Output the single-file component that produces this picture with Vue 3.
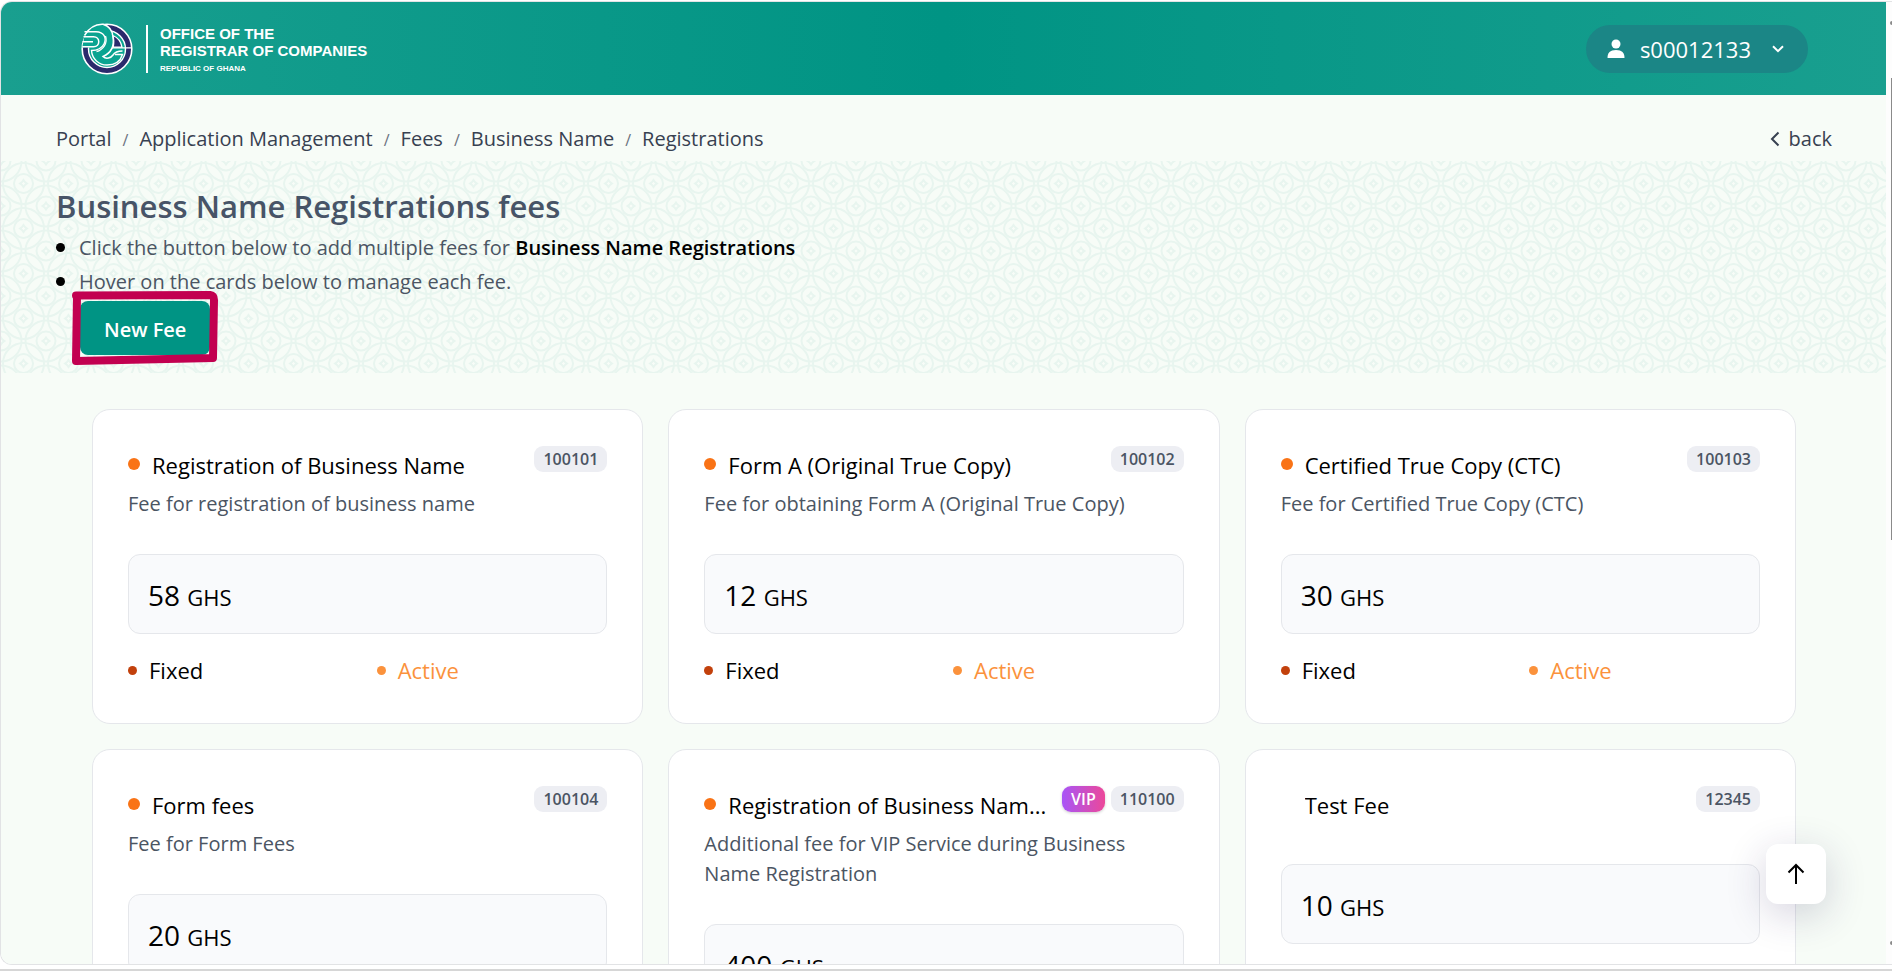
<script setup>
const crumbs = ['Portal', 'Application Management', 'Fees', 'Business Name', 'Registrations']

const fees = [
  { code: '100101', title: 'Registration of Business Name', desc: 'Fee for registration of business name', amount: 58, dot: true },
  { code: '100102', title: 'Form A (Original True Copy)', desc: 'Fee for obtaining Form A (Original True Copy)', amount: 12, dot: true },
  { code: '100103', title: 'Certified True Copy (CTC)', desc: 'Fee for Certified True Copy (CTC)', amount: 30, dot: true },
  { code: '100104', title: 'Form fees', desc: 'Fee for Form Fees', amount: 20, dot: true },
  { code: '110100', title: 'Registration of Business Nam...', desc: 'Additional fee for VIP Service during Business Name Registration', amount: 400, dot: true, vip: true },
  { code: '12345', title: 'Test Fee', desc: '', amount: 10, dot: false },
]
</script>

<template>
  <div class="frame">
    <div class="window">
      <div class="page">
        <header class="topbar">
          <a href="#" class="brand">
            <svg class="logo" viewBox="0 0 52 52" aria-hidden="true">
              <circle cx="26" cy="26" r="24.800" fill="#2b2a6c" stroke="#fff" stroke-width="1.600" />
              <circle cx="26" cy="26" r="18.500" fill="#0aa491" stroke="#fff" stroke-width="1.400" />
              <path d="M1.200 24.500L4 10.500C9 4 15 1.300 22 1.300C29 3 32 8 32.500 14C35 24 31 31 23 35L12 31L9 24.500Z" fill="#0aa491" />
              <path d="M3.500 12.500C8 5 15 1 22 1.300C28 3 31.500 8 32 14C33.500 23 30 30 22 33.500C25 36.500 30 35 32 32C33.500 29.500 36 28 41.500 28" fill="none" stroke="#fff" stroke-width="1.500" />
              <path d="M3.500 8.800H15C23 9 26 15 23 21C20.500 26 15 27.500 10.500 27.500C11 36 18 42 26 42C34 42 39.500 38 41.500 31.500H34" fill="none" stroke="#fff" stroke-width="1.400" />
              <path d="M2.500 13.800H12.500C19.500 13.800 19.500 23.800 12.500 23.800H1.200" fill="none" stroke="#fff" stroke-width="1.500" />
              <path d="M1.500 18.800H12" stroke="#fff" stroke-width="1.400" />
              <path d="M24.500 13C27 20 22 27 15.500 28.500" fill="none" stroke="#fff" stroke-width="1.300" />
              <path d="M31.800 12.500C37 14.500 40 18.500 41 24.200H32.200C33 20 33 16 31.800 12.500Z" fill="#2b2a6c" stroke="#fff" stroke-width="1.300" />
              <path d="M31 24.800H50.500" stroke="#fff" stroke-width="1.200" />
            </svg>
            <span class="rule"></span>
            <span class="brand-text">
              <span>OFFICE OF THE</span>
              <span>REGISTRAR OF COMPANIES</span>
              <small>REPUBLIC OF GHANA</small>
            </span>
          </a>
          <button type="button" class="user">
            <svg class="user-icon" viewBox="0 0 18 20" aria-hidden="true">
              <circle cx="9" cy="5" r="4.500" fill="#fff" />
              <path d="M0.500 18.500C0.500 14 3 11 9 11S17.500 14 17.500 18.500Q17.500 19 17 19H1Q0.500 19 0.500 18.500Z" fill="#fff" />
            </svg>
            <span>s00012133</span>
            <svg class="chev" viewBox="0 0 12 8" aria-hidden="true">
              <path d="M1 1.200L6 6.200L11 1.200" fill="none" stroke="#fff" stroke-width="2" />
            </svg>
          </button>
        </header>

        <div class="trail">
          <nav aria-label="Breadcrumb">
            <ol class="crumbs">
              <li v-for="c in crumbs" :key="c"><a href="#">{{ c }}</a></li>
            </ol>
          </nav>
          <a href="#" class="back">
            <svg viewBox="0 0 10 16" aria-hidden="true">
              <path d="M8.500 1.500L2 8L8.500 14.500" fill="none" stroke="#374151" stroke-width="2" />
            </svg>
            back
          </a>
        </div>

        <section class="hero">
          <svg class="pattern" aria-hidden="true">
            <defs>
              <pattern id="rings" width="45" height="45" patternUnits="userSpaceOnUse">
                <g fill="none" stroke="#e8f5ef" stroke-width="2">
                  <g v-for="p in [[22.5, 22.5], [0, 0], [45, 0], [0, 45], [45, 45]]" :key="p.join()" :transform="`translate(${p[0]} ${p[1]})`">
                    <circle r="20.500" />
                    <circle r="9.500" />
                    <path d="M0 -3.500L1.500 -1.500L3.500 0L1.500 1.500L0 3.500L-1.500 1.500L-3.500 0L-1.500 -1.500Z" />
                  </g>
                </g>
              </pattern>
            </defs>
            <rect width="100%" height="100%" fill="url(#rings)" />
          </svg>
          <div class="hero-body">
            <h1>Business Name Registrations fees</h1>
            <ul>
              <li>Click the button below to add multiple fees for <strong>Business Name Registrations</strong></li>
              <li>Hover on the cards below to manage each fee.</li>
            </ul>
            <div class="cta">
              <button type="button" class="new-fee">New Fee</button>
              <svg class="marker" viewBox="0 0 146 74" aria-hidden="true">
                <path d="M4 4.500L138 4C141 4.500 142 6 142 9L141 67L4 70L5 5" fill="none" stroke="#c20050" stroke-width="8" stroke-linecap="round" stroke-linejoin="round" />
              </svg>
            </div>
          </div>
        </section>

        <main class="grid">
          <article v-for="f in fees" :key="f.code" class="card">
            <div class="card-head">
              <span class="dot" :class="{ off: !f.dot }"></span>
              <h2>{{ f.title }}</h2>
              <div class="tags">
                <span v-if="f.vip" class="tag vip">VIP</span>
                <span class="tag">{{ f.code }}</span>
              </div>
            </div>
            <p class="desc">{{ f.desc }}</p>
            <div class="amount"><span>{{ f.amount }}</span> <small>GHS</small></div>
            <div class="meta">
              <span class="kind">Fixed</span>
              <span class="kind active">Active</span>
            </div>
          </article>
        </main>
      </div>
      <div class="scroll">
        <span class="tip"></span>
        <span class="thumb"></span>
        <span class="tip"></span>
      </div>
    </div>
    <button type="button" class="to-top" aria-label="Back to top">
      <svg viewBox="0 0 18 22" aria-hidden="true">
        <path d="M9 21V2M1.500 9.500L9 2L16.500 9.500" fill="none" stroke="#000" stroke-width="2" />
      </svg>
    </button>
  </div>
</template>

<style>
body {
  margin: 0;
  background: #fff;
}
</style>

<style scoped>
* {
  box-sizing: border-box;
}
.frame {
  position: relative;
  height: 100vh;
  padding: 1px 0 4px;
  overflow: hidden;
  background: #fff;
  border-bottom: 2px solid #d6d6d6;
  font-family: "Segoe UI", "Open Sans", "Noto Sans", sans-serif;
  font-size: 20px;
  color: #000;
}
.window {
  display: flex;
  height: 100%;
  overflow: hidden;
  border: 1px solid #e2e3e5;
  border-right: 0;
  border-radius: 12px 0 0 12px;
}
.page {
  flex: 1;
  min-width: 0;
  background: #f7fcf7;
}
.scroll {
  display: flex;
  flex-direction: column;
  align-items: flex-end;
  width: 6px;
  padding: 19px 0;
  background: #fdfdfd;
}
.thumb {
  width: 1px;
  height: 50%;
  margin: 53px 0 auto;
  background: #8a8a8a;
}
.tip {
  width: 2px;
  height: 4px;
  border-radius: 2px 0 0 2px;
  background: #8a8a8a;
}
a {
  color: inherit;
  text-decoration: none;
}
button {
  border: 0;
  font: inherit;
}
.topbar {
  display: flex;
  align-items: center;
  justify-content: space-between;
  height: 93px;
  padding: 0 78px 0 80px;
  background: linear-gradient(90deg, #199f8f, #009484 50%, #199f8f);
  color: #fff;
}
.brand {
  display: flex;
  align-items: center;
}
.logo {
  width: 52px;
  height: 52px;
}
.rule {
  width: 2px;
  height: 48px;
  margin: 0 12px 0 13px;
  background: #fff;
}
.brand-text {
  display: flex;
  flex-direction: column;
  padding-top: 2px;
  font: bold 15px/17px "Liberation Sans", Arial, sans-serif;
}
.brand-text small {
  margin-top: 4px;
  font-size: 8px;
  line-height: 12px;
}
.user {
  display: flex;
  align-items: center;
  height: 48px;
  padding: 0 24px 0 21px;
  border-radius: 24px;
  background: #1b8686;
  color: #fff;
  font-size: 22px;
}
.user-icon {
  width: 18px;
  height: 20px;
  margin-right: 15px;
}
.chev {
  width: 12px;
  height: 8px;
  margin-left: 21px;
}
.trail {
  display: flex;
  align-items: center;
  justify-content: space-between;
  height: 66px;
  padding: 21px 54px 0 55px;
  color: #374151;
}
.crumbs {
  display: flex;
  margin: 0;
  padding: 0;
  list-style: none;
}
.crumbs li + li::before {
  content: "/";
  margin: 0 11px;
  color: #6b7280;
  font-size: 16px;
}
.back {
  display: flex;
  align-items: center;
  gap: 9px;
}
.back svg {
  width: 10px;
  height: 16px;
}
.hero {
  position: relative;
  height: 212px;
}
.pattern {
  position: absolute;
  inset: 0;
  width: 100%;
  height: 100%;
}
.hero-body {
  position: relative;
  padding: 22px 55px 0;
}
h1 {
  margin: 0;
  color: #475467;
  font-size: 31px;
  font-weight: 600;
  line-height: 46px;
}
ul {
  margin: 0;
  padding: 2px 0 0;
  list-style: none;
}
ul li {
  display: flex;
  align-items: center;
  color: #4b5563;
  line-height: 34px;
  white-space: pre;
}
ul li::before {
  content: "";
  width: 9px;
  height: 9px;
  margin: 0 14px 2px 0;
  border-radius: 50%;
  background: #000;
}
strong {
  color: #000;
  font-weight: 600;
}
.cta {
  position: relative;
  width: max-content;
  margin: 2px 0 0 24px;
}
.new-fee {
  height: 54px;
  padding: 2px 24px 0;
  border-radius: 8px;
  background: #009484;
  color: #fff;
  font-weight: 600;
}
.marker {
  position: absolute;
  left: -8px;
  top: -10px;
  width: 146px;
  height: 74px;
  pointer-events: none;
}
.grid {
  display: grid;
  grid-template-columns: repeat(3, minmax(0, 1fr));
  align-items: start;
  gap: 25px;
  padding: 36px 90px 36px 91px;
}
.card {
  padding: 35px;
  border: 1px solid #e5e7eb;
  border-radius: 18px;
  background: #fff;
}
.card-head {
  display: flex;
  align-items: center;
  height: 44px;
  padding-bottom: 4px;
}
.dot {
  flex: none;
  width: 12px;
  height: 12px;
  margin: 0 12px 2px 0;
  border-radius: 50%;
  background: #f97316;
}
.dot.off {
  visibility: hidden;
}
h2 {
  flex: 1;
  min-width: 0;
  margin: 0;
  overflow: hidden;
  font-size: 22px;
  font-weight: 400;
  line-height: 40px;
  text-overflow: ellipsis;
  white-space: nowrap;
}
.tags {
  display: flex;
  align-self: flex-start;
  gap: 6px;
  margin: 1px 0 0 10px;
}
.tag {
  height: 26px;
  padding: 0 9px;
  border-radius: 9px;
  background: #edeef3;
  color: #4b5563;
  font-size: 16px;
  font-weight: 600;
  line-height: 26px;
}
.vip {
  background: linear-gradient(90deg, #a855f7, #ec4899);
  box-shadow: 0 1px 3px rgba(0, 0, 0, 0.2);
  color: #fff;
}
.desc {
  min-height: 0;
  margin: 0 0 35px;
  color: #4b5563;
  line-height: 30px;
}
.amount {
  height: 80px;
  padding: 0 19px;
  border: 1px solid #e5e7eb;
  border-radius: 12px;
  background: #f9fafc;
  font-size: 28px;
  line-height: 80px;
}
.amount small {
  font-size: 22px;
}
.meta {
  display: grid;
  grid-template-columns: 1fr 1fr;
  gap: 18px;
  margin-top: 18px;
}
.kind {
  display: flex;
  align-items: center;
  gap: 12px;
  font-size: 22px;
  line-height: 36px;
}
.kind::before {
  content: "";
  width: 9px;
  height: 9px;
  border-radius: 50%;
  background: #c2410c;
}
.active {
  color: #fb923c;
}
.active::before {
  background: #fb923c;
}
.to-top {
  position: absolute;
  right: 66px;
  bottom: 65px;
  display: grid;
  place-items: center;
  width: 60px;
  height: 60px;
  padding: 0;
  border-radius: 12px;
  background: #fff;
  box-shadow: 0 10px 40px rgba(40, 30, 90, 0.2);
}
.to-top svg {
  width: 18px;
  height: 22px;
}
</style>
